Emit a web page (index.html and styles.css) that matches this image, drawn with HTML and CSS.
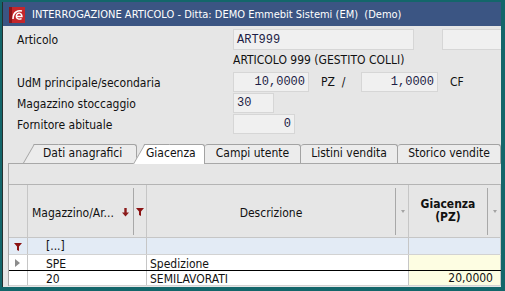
FILE: index.html
```html
<!DOCTYPE html>
<html lang="it">

<head>
  <meta charset="utf-8" />
  <title>Interrogazione articolo</title>
  <link rel="stylesheet" href="styles.css">
</head>

<body>
  <div class="window">
    <div class="titlebar">
      <svg class="logo" width="16" height="16" viewBox="0 0 16 16">
        <rect width="16" height="16" fill="#c4262b" />
        <rect width="3" height="16" fill="#8e1519" />
        <path d="M4 12 C4 5 9 3 13 4" stroke="#fff" stroke-width="1.6" fill="none" />
        <path d="M7.5 9.5 H13 C13 7 11 6 9.8 6.2 C8 6.5 7 8.2 7.4 10 C7.8 12 10 12.6 12.6 11.6" stroke="#fff" stroke-width="1.4" fill="none" />
      </svg>
      <span>INTERROGAZIONE ARTICOLO - Ditta: DEMO Emmebit Sistemi (EM)&nbsp; (Demo)</span>
    </div>

    <div class="form">
      <div class="row r1">
        <label>Articolo</label>
        <div class="field code">ART999</div>
        <div class="field extra"></div>
      </div>
      <div class="row r2">
        <label></label>
        <span>ARTICOLO 999 (GESTITO COLLI)</span>
      </div>
      <div class="row r3">
        <label>UdM principale/secondaria</label>
        <div class="field num qty">10,0000</div>
        <span class="unit">PZ&nbsp; /</span>
        <div class="field num qty2">1,0000</div>
        <span class="unit2">CF</span>
      </div>
      <div class="row r4">
        <label>Magazzino stoccaggio</label>
        <div class="field mag">30</div>
      </div>
      <div class="row r5">
        <label>Fornitore abituale</label>
        <div class="field num forn">0</div>
      </div>
    </div>

    <div class="tabs">
      <div class="tab slant t-dati">Dati anagrafici</div>
      <div class="tab slant active t-giac">Giacenza</div>
      <div class="tab t-campi">Campi utente</div>
      <div class="tab t-listini">Listini vendita</div>
      <div class="tab t-storico">Storico vendite</div>
    </div>

    <div class="panel">
      <div class="toolbar"></div>
      <div class="grid">
        <div class="grow head">
          <div class="cell ind"></div>
          <div class="cell hcol">
            <div class="htext left">Magazzino/Ar...
              <svg class="sort" width="7" height="9" viewBox="0 0 7 9">
                <path d="M2.3 0 H4.7 V4.5 H7 L3.5 8.5 L0 4.5 H2.3 Z" fill="#8b1a1a" />
              </svg>
            </div>
            <div class="drop">
              <svg width="8" height="8" viewBox="0 0 8 8">
                <path d="M0 0 H8 L5 3.5 V8 L3 7 V3.5 Z" fill="#8b1212" />
              </svg>
            </div>
          </div>
          <div class="cell hcol">
            <div class="htext">Descrizione</div>
            <div class="drop"><i class="tri"></i></div>
          </div>
          <div class="cell hcol">
            <div class="htext bold">Giacenza<br>(PZ)</div>
            <div class="drop"><i class="tri"></i></div>
          </div>
        </div>

        <div class="grow filter">
          <div class="cell ind">
            <svg width="8" height="8" viewBox="0 0 8 8">
              <path d="M0 0 H8 L5 3.5 V8 L3 7 V3.5 Z" fill="#8b1212" />
            </svg>
          </div>
          <div class="cell txt">[...]</div>
          <div class="cell"></div>
          <div class="cell"></div>
        </div>

        <div class="grow data current">
          <div class="cell ind"><i class="arrow"></i></div>
          <div class="cell txt">SPE</div>
          <div class="cell txt">Spedizione</div>
          <div class="cell qtycell"></div>
        </div>

        <div class="grow data last">
          <div class="cell ind"></div>
          <div class="cell txt">20</div>
          <div class="cell txt">SEMILAVORATI</div>
          <div class="cell qtycell right">20,0000</div>
        </div>
      </div>
    </div>
  </div>
</body>

</html>
```

FILE: styles.css
```css
body {
  margin: 0;
  background-color: #13666a;
  overflow: hidden;
  font-family: "DejaVu Sans Condensed", "Liberation Sans", Arial, sans-serif;
  font-size: 12px;
  color: #111;
}

.window {
  margin: 2px 0 0 2px;
  width: 499px;
  height: 285px;
  box-sizing: border-box;
  border-left: 1px solid #25302f;
  background-color: #e6e6e6;
  overflow: hidden;
}

.titlebar {
  height: 24px;
  display: flex;
  align-items: center;
  gap: 7px;
  padding: 1px 0 0 6px;
  box-sizing: border-box;
  background-color: #3b5583;
  color: #fff;
  font-size: 11px;
  white-space: nowrap;
}

/* form */
.form {
  padding: 3px 0 0 14px;
}

.row {
  display: flex;
  align-items: center;
  height: 20px;
  white-space: nowrap;
}

.row label {
  width: 216px;
  flex: none;
  padding-top: 1px;
}

.r1 {
  height: 21px;
}

.r3 {
  margin-top: 2px;
}

.r4,
.r5 {
  margin-top: 1px;
}

.field {
  height: 100%;
  box-sizing: border-box;
  border: 1px solid #d6d6d6;
  background-color: #f0f0f0;
  font-family: "Liberation Mono", "Courier New", monospace;
  font-size: 12px;
  color: #1d1d45;
  padding: 0 3px;
  display: flex;
  align-items: center;
  flex: none;
}

.num {
  justify-content: flex-end;
}

.code {
  width: 181px;
}

.extra {
  width: 80px;
  margin-left: 28px;
}

.qty {
  width: 76px;
}

.unit {
  width: 40px;
  margin-left: 12px;
}

.qty2 {
  width: 77px;
}

.unit2 {
  margin-left: 12px;
}

.mag {
  width: 41px;
}

.forn {
  width: 62px;
}

/* tabs */
.tabs {
  display: flex;
  align-items: flex-end;
  height: 19px;
  margin-top: 10px;
  padding-left: 30px;
}

.tab {
  height: 19px;
  box-sizing: border-box;
  border: 1px solid #a3a3a3;
  border-bottom: none;
  border-radius: 3px 3px 0 0;
  background-color: #ececec;
  line-height: 17px;
  text-align: center;
  white-space: nowrap;
  flex: none;
}

.slant {
  position: relative;
  z-index: 1;
  border-left: none;
  text-align: left;
}

.slant::before {
  content: "";
  position: absolute;
  left: -10px;
  top: -1px;
  bottom: 0;
  width: 24px;
  border-left: 1px solid #a3a3a3;
  border-top: 1px solid #a3a3a3;
  background-color: inherit;
  transform-origin: bottom left;
  transform: skewX(-30deg);
  z-index: -1;
}

.t-dati {
  width: 104px;
  padding-left: 10px;
}

.t-giac {
  width: 62px;
  margin-left: 6px;
  padding-left: 3px;
}

.active {
  background-color: #fff;
  height: 20px;
  margin-bottom: -1px;
  z-index: 2;
}

.t-campi {
  width: 96px;
  border-left: none;
}

.t-listini {
  width: 97px;
  border-left: none;
}

.t-storico {
  width: 103px;
  border-left: none;
}

/* panel and grid */
.panel {
  margin-left: 5px;
  border-top: 1px solid #a8a8a8;
  border-left: 1px solid #a8a8a8;
}

.toolbar {
  height: 20px;
}

.grid {
  border-top: 1px solid #b4b4b4;
}

.grow {
  display: grid;
  grid-template-columns: 19px 119px 262px 92px;
  box-sizing: border-box;
  border-bottom: 1px solid #d2d2d2;
}

.cell {
  border-right: 1px solid #c6c6c6;
  display: flex;
  align-items: center;
  overflow: hidden;
  white-space: nowrap;
}

.head {
  height: 53px;
  border-bottom-color: #c6c6c6;
}

.head .cell {
  background-color: #e6e6e6;
}

.hcol {
  align-items: stretch;
}

.htext {
  flex: 1;
  display: flex;
  align-items: center;
  justify-content: center;
  text-align: center;
  padding-top: 3px;
}

.htext.left {
  justify-content: space-between;
  padding-left: 4px;
  padding-right: 4px;
}

.bold {
  font-weight: bold;
  line-height: 13px;
  padding-top: 0;
}

.sort {
  margin-top: -1px;
}

.drop {
  width: 12px;
  margin: 3px 0 2px;
  border-left: 1px solid #a8a8a8;
  display: flex;
  align-items: center;
  justify-content: center;
}

.tri {
  width: 0;
  height: 0;
  border-left: 2.5px solid transparent;
  border-right: 2.5px solid transparent;
  border-top: 3px solid #a3a3a3;
  margin-left: 1px;
}

.filter {
  height: 17px;
  background-color: #e3ebf5;
}

.filter .ind {
  justify-content: center;
  padding-top: 1px;
}

.txt {
  padding-left: 3px;
}

.filter .txt {
  padding-left: 18px;
}

.data {
  height: 16px;
  background-color: #fff;
}

.data .cell:nth-child(2) {
  padding-left: 18px;
}

.data .txt {
  padding-top: 2px;
}

.current {
  border-bottom-color: #000;
}

.last {
  height: 15px;
}

.arrow {
  width: 0;
  height: 0;
  border-top: 4px solid transparent;
  border-bottom: 4px solid transparent;
  border-left: 5px solid #8c8c8c;
  margin-left: 6px;
}

.qtycell {
  background-color: #fdfde2;
}

.right {
  justify-content: flex-end;
  padding-right: 7px;
}
```
